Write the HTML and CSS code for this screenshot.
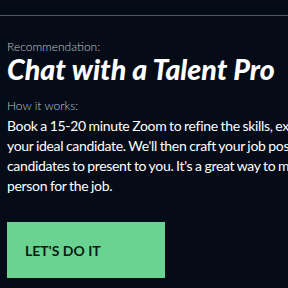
FILE: index.html
```html
<!DOCTYPE html>
<html>
<head>
<meta charset="utf-8">
<link rel="stylesheet" href="styles.css">
</head>
<body>
<div class="page">
  <hr class="rule">
  <section class="rec">
    <div class="label">Recommendation:</div>
    <h1 class="title">Chat with a Talent Pro</h1>
    <div class="label how">How it works:</div>
    <p class="body">Book a 15-20 minute Zoom to refine the skills, experience and traits of<br>your ideal candidate. We'll then craft your job posting and source top<br>candidates to present to you. It's a great way to meet the perfect<br>person for the job.</p>
    <a class="btn">LET'S DO IT</a>
  </section>
</div>
</body>
</html>
```
FILE: styles.css
```css
html, body {
  margin: 0;
  padding: 0;
  background: #050c17;
  overflow: hidden;
}
.page {
  width: 288px;
  height: 288px;
  overflow: hidden;
  font-family: Lato, "Noto Sans", sans-serif;
}
.rule {
  margin: 15px 0 0 0;
  border: 0;
  height: 1px;
  background: #4d5862;
}
.rec {
  padding: 0 0 0 7px;
  width: 520px;
}
.label {
  margin-top: 24px;
  font-size: 12px;
  line-height: 14px;
  font-weight: 300;
  color: #c3c7cc;
}
.title {
  margin: 0;
  font-size: 28.5px;
  line-height: 30px;
  font-weight: 900;
  font-style: italic;
  color: #ffffff;
}
.how {
  margin-top: 15px;
}
.body {
  margin: 3px 0 0 0;
  font-size: 14px;
  line-height: 20px;
  letter-spacing: -0.33px;
  word-spacing: -0.5px;
  color: #ffffff;
  white-space: nowrap;
}
.btn {
  display: flex;
  align-items: center;
  box-sizing: border-box;
  margin-top: 26px;
  width: 158px;
  height: 56px;
  padding-left: 18px;
  background: #6bd392;
  color: #0b1a12;
  font-size: 14px;
  font-weight: 700;
}
```
